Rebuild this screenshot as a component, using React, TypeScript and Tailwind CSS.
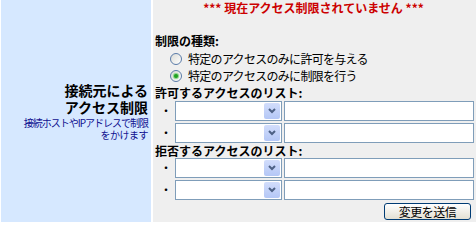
import React from "react";

function Radio({ checked }: { checked?: boolean }) {
  return (
    <span className="w-[12px] h-[12px] rounded-full border border-[#5a7ba8] bg-linear-to-br from-[#dcdcd6] to-white flex items-center justify-center shrink-0">
      {checked ? <span className="w-[4px] h-[4px] rounded-full bg-[#21a121] shadow-[0_0_1px_1px_#7fd17f]" /> : null}
    </span>
  );
}

function Row() {
  return (
    <div className="flex items-center h-[20px]">
      <div className="w-[22px] text-right pr-[3px] text-[12px] leading-[20px]">・</div>
      <div className="w-[107px] h-[20px] border border-[#7f9db9] bg-white flex justify-end items-center pr-[1px]">
        <div className="w-[16px] h-[16px] rounded-[2px] bg-linear-to-b from-[#d2ddfb] to-[#b4c7f6] flex items-center justify-center">
          <svg width="8" height="6" viewBox="0 0 8 6">
            <path d="M1 1 L4 4 L7 1" stroke="#4d6185" strokeWidth="2" fill="none" />
          </svg>
        </div>
      </div>
      <div className="ml-[2px] w-[190px] h-[20px] border border-[#7f9db9] bg-white" />
    </div>
  );
}

export default function App() {
  return (
    <div className="w-[476px] h-[223px] bg-white flex pl-[1px] pb-[1px] gap-[2px] font-['Noto_Sans_CJK_JP',sans-serif] text-black">
      <div className="w-[150px] bg-[#d6e8ff] flex flex-col justify-center items-end text-right pr-[3px]">
        <div className="text-[14px] font-bold leading-[17px]">接続元による</div>
        <div className="text-[14px] font-bold leading-[17px]">アクセス制限</div>
        <div className="mt-[1px] text-[10px] leading-[12px] tracking-[-1px] text-[#101090]">接続ホストやIPアドレスで制限</div>
        <div className="text-[10px] leading-[12px] tracking-[-0.5px] text-[#101090]">をかけます</div>
      </div>
      <div className="flex-1 bg-[#efefef] flex flex-col pr-[2px]">
        <div className="h-[16px] text-center text-[12px] leading-[16px] font-bold text-[#cc0000]">*** 現在アクセス制限されていません ***</div>
        <div className="mt-[17px] h-[16px] pl-[2px] text-[12px] leading-[16px] font-bold">制限の種類:</div>
        <div className="mt-[1px] h-[17px] pl-[17px] flex items-center gap-[6px] text-[12px] tracking-[-0.7px]">
          <Radio />
          <span>特定のアクセスのみに許可を与える</span>
        </div>
        <div className="h-[17px] pl-[17px] flex items-center gap-[6px] text-[12px] tracking-[-0.7px]">
          <Radio checked />
          <span>特定のアクセスのみに制限を行う</span>
        </div>
        <div className="mt-[1px] h-[16px] pl-[2px] text-[12px] leading-[16px] font-bold">許可するアクセスのリスト:</div>
        <div className="flex flex-col gap-[2px]">
          <Row />
          <Row />
        </div>
        <div className="h-[15px] pl-[2px] text-[12px] leading-[15px] font-bold">拒否するアクセスのリスト:</div>
        <div className="flex flex-col gap-[2px]">
          <Row />
          <Row />
        </div>
        <div className="mt-[3px] flex justify-end pr-[3px]">
          <button className="w-[87px] h-[17px] border border-[#003c74] rounded-[3px] bg-linear-to-b from-white to-[#e3e0d3] text-[12px] leading-[15px] tracking-[-0.5px]">
            変更を送信
          </button>
        </div>
      </div>
    </div>
  );
}
